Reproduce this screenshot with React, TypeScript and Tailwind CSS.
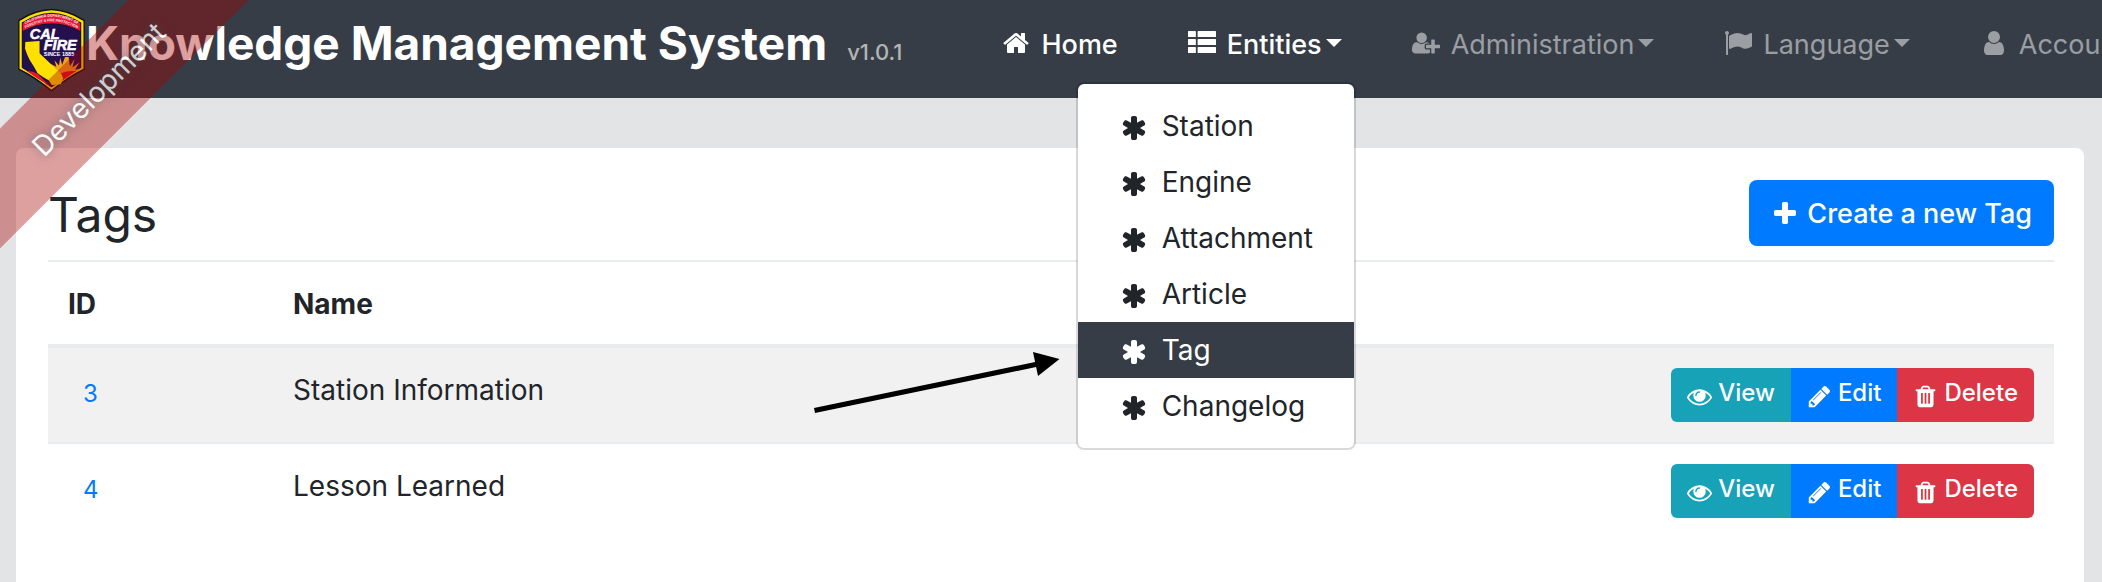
import type { ReactNode } from "react";

const GLYPHS = {
  home: "M1472 992v480q0 26-19 45t-45 19h-384v-384h-256v384h-384q-26 0-45-19t-19-45v-480q0-1 .5-3t.5-3l575-474 575 474q1 2 1 6zm223-69l-62 74q-8 9-21 11h-3q-13 0-21-7l-692-577-692 577q-12 8-24 7-13-2-21-11l-62-74q-8-10-7-23.5t11-21.5l719-599q32-26 76-26t76 26l244 204v-195q0-14 9-23t23-9h192q14 0 23 9t9 23v408l219 182q10 8 11 21.5t-7 23.5z",
  list: "M40 128h424q40 0 40 40v304q0 40-40 40h-424q-40 0-40-40v-304q0-40 40-40zm616 0h1096q40 0 40 40v304q0 40-40 40h-1096q-40 0-40-40v-304q0-40 40-40zm-616 512h424q40 0 40 40v304q0 40-40 40h-424q-40 0-40-40v-304q0-40 40-40zm616 0h1096q40 0 40 40v304q0 40-40 40h-1096q-40 0-40-40v-304q0-40 40-40zm-616 512h424q40 0 40 40v304q0 40-40 40h-424q-40 0-40-40v-304q0-40 40-40zm616 0h1096q40 0 40 40v304q0 40-40 40h-1096q-40 0-40-40v-304q0-40 40-40z",
  userPlus:
    "M704 896q-159 0-271.5-112.5t-112.5-271.5 112.5-271.5 271.5-112.5 271.5 112.5 112.5 271.5-112.5 271.5-271.5 112.5zm960 128h352q13 0 22.5 9.5t9.5 22.5v192q0 13-9.5 22.5t-22.5 9.5h-352v352q0 13-9.5 22.5t-22.5 9.5h-192q-13 0-22.5-9.5t-9.5-22.5v-352h-352q-13 0-22.5-9.5t-9.5-22.5v-192q0-13 9.5-22.5t22.5-9.5h352v-352q0-13 9.5-22.5t22.5-9.5h192q13 0 22.5 9.5t9.5 22.5v352zm-736 224q0 52 38 90t90 38h256v238q-68 50-171 50h-874q-121 0-194-69t-73-190q0-53 3.5-103.5t14-109 26.5-108.5 43-97.5 62-81 85.5-53.5 111.5-20q19 0 39 17 79 61 154.5 91.5t164.5 30.5 164.5-30.5 154.5-91.5q20-17 39-17 132 0 217 96h-223q-52 0-90 38t-38 90v192z",
  flag: "M320 256q0 72-64 110v1266q0 13-9.5 22.5t-22.5 9.5h-64q-13 0-22.5-9.5t-9.5-22.5v-1266q-64-38-64-110 0-53 37.5-90.5t90.5-37.5 90.5 37.5 37.5 90.5zm1472 64v763q0 25-12.5 38.5t-39.5 27.5q-215 116-369 116-61 0-123.5-22t-108.5-48-115.5-48-142.5-22q-192 0-464 146-17 9-33 9-26 0-45-19t-19-45v-742q0-32 31-55 21-14 79-43 236-120 421-120 107 0 200 29t219 88q38 19 88 19 54 0 117.5-21t110-47 88-47 54.5-21q26 0 45 19t19 45z",
  user: "M1536 1399q0 109-62.5 187t-150.5 78h-854q-88 0-150.5-78t-62.5-187q0-85 8.5-160.5t31.5-152 58.5-131 94-89 134.5-34.5q131 128 313 128t313-128q76 0 134.5 34.5t94 89 58.5 131 31.5 152 8.5 160.5zm-256-887q0 159-112.5 271.5t-271.5 112.5-271.5-112.5-112.5-271.5 112.5-271.5 271.5-112.5 271.5 112.5 112.5 271.5z",
  asterisk:
    "M1546 1050q46 26 59.5 77.5t-12.5 97.5l-64 110q-26 46-77.5 59.5t-97.5-12.5l-266-153v307q0 52-38 90t-90 38h-128q-52 0-90-38t-38-90v-307l-266 153q-46 26-97.5 12.5t-77.5-59.5l-64-110q-26-46-12.5-97.5t59.5-77.5l266-154-266-154q-46-26-59.5-77.5t12.5-97.5l64-110q26-46 77.5-59.5t97.5 12.5l266 153v-307q0-52 38-90t90-38h128q52 0 90 38t38 90v307l266-153q46-26 97.5-12.5t77.5 59.5l64 110q26 46 12.5 97.5t-59.5 77.5l-266 154z",
  plus: "M1600 736v192q0 40-28 68t-68 28h-416v416q0 40-28 68t-68 28h-192q-40 0-68-28t-28-68v-416h-416q-40 0-68-28t-28-68v-192q0-40 28-68t68-28h416v-416q0-40 28-68t68-28h192q40 0 68 28t28 68v416h416q40 0 68 28t28 68z",
  eye: "M1664 960q-152-236-381-353 61 104 61 225 0 185-131.5 316.5t-316.5 131.5-316.5-131.5-131.5-316.5q0-121 61-225-229 117-381 353 133 205 333.5 326.5t434.5 121.5 434.5-121.5 333.5-326.5zm-720-384q0-20-14-34t-34-14q-125 0-214.5 89.5t-89.5 214.5q0 20 14 34t34 14 34-14 14-34q0-86 61-147t147-61q20 0 34-14t14-34zm848 384q0 34-20 69-140 230-376.5 368.5t-499.5 138.5-499.5-139-376.5-368q-20-35-20-69t20-69q140-229 376.5-368t499.5-139 499.5 139 376.5 368q20 35 20 69z",
  pencil:
    "M491 1536l91-91-235-235-91 91v107h128v128h107zm523-928q0-22-22-22-10 0-17 7l-542 542q-7 7-7 17 0 22 22 22 10 0 17-7l542-542q7-7 7-17zm-54-192l416 416-832 832h-416v-416zm683 96q0 53-37 90l-166 166-416-416 166-165q36-38 90-38 53 0 91 38l235 234q37 39 37 91z",
  trash:
    "M704 1376v-704q0-14-9-23t-23-9h-64q-14 0-23 9t-9 23v704q0 14 9 23t23 9h64q14 0 23-9t9-23zm256 0v-704q0-14-9-23t-23-9h-64q-14 0-23 9t-9 23v704q0 14 9 23t23 9h64q14 0 23-9t9-23zm256 0v-704q0-14-9-23t-23-9h-64q-14 0-23 9t-9 23v704q0 14 9 23t23 9h64q14 0 23-9t9-23zm-544-992h448l-48-117q-7-9-17-11h-317q-10 2-17 11zm928 32v64q0 14-9 23t-23 9h-96v948q0 83-47 143.5t-113 60.5h-832q-66 0-113-58.5t-47-141.5v-952h-96q-14 0-23-9t-9-23v-64q0-14 9-23t23-9h309l70-167q15-37 54-63t79-26h320q40 0 79 26t54 63l70 167h309q14 0 23 9t9 23z",
};

type GlyphName = keyof typeof GLYPHS;

function Glyph({ name, className = "size-7" }: { name: GlyphName; className?: string }) {
  const width = name === "userPlus" ? 2048 : 1792;
  return (
    <svg viewBox={`0 0 ${width} 1792`} fill="currentColor" aria-hidden="true" className={`shrink-0 ${className}`}>
      <path d={GLYPHS[name]} />
    </svg>
  );
}

function Caret() {
  return (
    <svg viewBox="0 0 16 8" fill="currentColor" aria-hidden="true" className="mb-1 ml-1 h-2 w-4 shrink-0">
      <path d="M0 0h16l-8 8z" />
    </svg>
  );
}

function Logo() {
  return (
    <svg viewBox="12 10 210 260" role="img" aria-label="Cal Fire" className="mt-0.5 h-[84px] w-[69px] shrink-0">
      <defs>
        <clipPath id="field">
          <path d="M27 74Q70 54 117 53Q164 54 207 74V196Q164 226 117 255Q70 226 27 196Z" />
        </clipPath>
        <path id="arc-top" d="M33 62Q76 37 117 37Q158 37 201 62" />
        <path id="arc-low" d="M32 76Q76 51 117 51Q158 51 202 76" />
      </defs>
      <path d="M14 47Q64 14 117 12Q170 14 220 47V201Q172 224 117 269Q62 224 14 201Z" fill="#14121c" />
      <path d="M18 50Q66 19 117 17Q168 19 216 50V198Q170 220 117 263Q64 220 18 198Z" fill="#ffe100" />
      <path d="M25 55Q70 27 117 25Q164 27 209 55V195Q166 216 117 255Q68 216 25 195Z" fill="#14121c" />
      <path d="M28 57Q72 30 117 28Q162 30 206 57V81Q164 58 117 57Q70 58 28 81Z" fill="#ee1438" />
      <g clipPath="url(#field)">
        <path d="M27 82Q70 61 117 60Q164 61 207 82V260H27Z" fill="#24104f" />
        <path
          d="M170 162l4 28 14-22-6 26 22-16-14 22 24-4-22 12v14h-64l-4-14-18-8 20-2-14-16 20 10-6-20 14 16 4-24 6 22 9-24z"
          fill="#f5a21d"
        />
        <circle cx="166" cy="210" r="22" fill="#f5a21d" />
        <path d="M27 207Q52 200 75 214L120 260H27Z" fill="#e8132f" />
        <path d="M138 216Q170 200 207 208V260H118Z" fill="#e8132f" />
      </g>
      <path
        d="M36 115L80 112V150L148 215L153 228L146 246L118 248L108 234L92 224L74 212L62 190L50 172L42 155L35 135Z"
        fill="#ffe100"
      />
      <g fill="#ffe3e3" fontFamily="Inter, sans-serif" fontWeight="700">
        <text fontSize="11.5" textAnchor="middle">
          <textPath href="#arc-top" startOffset="50%">CALIFORNIA DEPARTMENT OF</textPath>
        </text>
        <text fontSize="11" textAnchor="middle">
          <textPath href="#arc-low" startOffset="50%">FORESTRY &amp; FIRE PROTECTION</textPath>
        </text>
      </g>
      <g fill="#fff" fontFamily="'Liberation Sans', Arial, sans-serif" fontWeight="700">
        <text x="50" y="107" fontSize="45" fontStyle="italic" stroke="#fff" strokeWidth="1.5">CAL</text>
        <text x="93" y="141" fontSize="45" fontStyle="italic" stroke="#fff" strokeWidth="1.5">FIRE</text>
        <text x="93" y="160" fontSize="17">SINCE 1885</text>
      </g>
    </svg>
  );
}

function NavItem({
  icon,
  label,
  caret = false,
  active = false,
  children,
}: {
  icon: GlyphName;
  label: string;
  caret?: boolean;
  active?: boolean;
  children?: ReactNode;
}) {
  const body = (
    <>
      <span className="mb-1 mr-[7px] flex w-9 justify-center">
        <Glyph name={icon} />
      </span>
      {label}
      {caret && <Caret />}
    </>
  );
  const look = `flex items-center whitespace-nowrap text-[27px] leading-10 ${
    active ? "font-medium text-white" : "text-white/50"
  }`;
  return (
    <li className="relative shrink-0">
      {caret ? (
        <button type="button" className={look} aria-haspopup="menu">
          {body}
        </button>
      ) : (
        <a href="#" className={look}>
          {body}
        </a>
      )}
      {children}
    </li>
  );
}

const ENTITIES = ["Station", "Engine", "Attachment", "Article", "Tag", "Changelog"];

function EntityMenu({ current }: { current: string }) {
  return (
    <ul className="absolute -right-3.5 top-full z-20 mt-[17px] w-[280px] rounded-lg border-2 border-black/15 bg-white bg-clip-padding py-3.5">
      {ENTITIES.map((name) => (
        <li key={name}>
          <a
            href="#"
            className={`flex items-center pl-[38px] text-[28px] leading-[56px] ${
              name === current ? "bg-[#363d47] text-white" : "text-[#212529]"
            }`}
          >
            <span className="mr-2.5 mt-1 flex w-9 justify-center">
              <Glyph name="asterisk" />
            </span>
            {name}
          </a>
        </li>
      ))}
    </ul>
  );
}

function RowButton({ icon, label, className }: { icon: GlyphName; label: string; className: string }) {
  return (
    <button
      type="button"
      className={`flex items-center gap-1.5 px-4 pb-3 pt-2 text-2xl font-medium leading-[34px] text-white ${className}`}
    >
      <Glyph name={icon} className="mt-1.5 size-[25px]" />
      {label}
    </button>
  );
}

const TAGS = [
  { id: 3, name: "Station Information" },
  { id: 4, name: "Lesson Learned" },
];

export default function App() {
  return (
    <div className="relative flex min-h-screen flex-col overflow-hidden bg-[#e3e4e6] font-['Inter',sans-serif] text-[#212529]">
      <nav className="relative z-10 flex items-center bg-[#363d47] py-1.5 pl-[17px]">
        <a href="#" className="mr-24 flex shrink-0 items-center">
          <Logo />
          <span className="mb-3 flex items-baseline whitespace-nowrap">
            <span className="text-[46px] font-bold leading-[60px] text-white">Knowledge Management System</span>
            <span className="ml-5 text-[22px] font-medium text-[#b4b4b4]">v1.0.1</span>
          </span>
        </a>
        <ul className="flex gap-[66px] pb-2">
          <NavItem icon="home" label="Home" active />
          <NavItem icon="list" label="Entities" caret active>
            <EntityMenu current="Tag" />
          </NavItem>
          <NavItem icon="userPlus" label="Administration" caret />
          <NavItem icon="flag" label="Language" caret />
          <NavItem icon="user" label="Account" caret />
        </ul>
      </nav>

      <main className="ml-4 mr-[18px] mt-[50px] flex-1 rounded-t-lg bg-white pl-8 pr-[30px] pt-8">
        <header className="mb-3.5 flex items-start justify-between">
          <h1 className="pt-1 text-5xl leading-[62px]">Tags</h1>
          <button
            type="button"
            className="flex items-center gap-2 rounded-lg bg-[#007bff] px-[22px] pt-px text-[27px] font-medium leading-[65px] text-white"
          >
            <Glyph name="plus" />
            Create a new Tag
          </button>
        </header>

        <table className="w-full border-separate border-spacing-0 text-left text-[28px] leading-[42px]">
          <thead>
            <tr>
              <th scope="col" className="w-[225px] border-b-4 border-t-2 border-[#e9ecef] px-5 pb-[19px] pt-[21px] font-bold">
                ID
              </th>
              <th scope="col" className="border-b-4 border-t-2 border-[#e9ecef] px-5 pb-[19px] pt-[21px] font-bold">
                Name
              </th>
              <td className="border-b-4 border-t-2 border-[#e9ecef]" />
            </tr>
          </thead>
          <tbody>
            {TAGS.map((tag, i) => {
              const cell = `px-5 pb-[19px] pt-[21px] align-top ${i > 0 ? "border-t-2 border-[#e9ecef]" : ""}`;
              const actionCell = `px-5 py-5 align-top ${i > 0 ? "border-t-2 border-[#e9ecef]" : ""}`;
              return (
                <tr key={tag.id} className={i % 2 === 0 ? "bg-[#f1f1f1]" : ""}>
                  <td className={cell}>
                    <a href="#" className="block px-[15px] pb-3 pt-2 text-2xl leading-[34px] text-[#007bff]">
                      {tag.id}
                    </a>
                  </td>
                  <td className={cell}>{tag.name}</td>
                  <td className={actionCell}>
                    <div className="flex justify-end">
                      <RowButton icon="eye" label="View" className="rounded-l-md bg-[#17a2b8]" />
                      <RowButton icon="pencil" label="Edit" className="bg-[#007bff]" />
                      <RowButton icon="trash" label="Delete" className="rounded-r-md bg-[#dc3545]" />
                    </div>
                  </td>
                </tr>
              );
            })}
          </tbody>
        </table>
      </main>

      <div className="pointer-events-none absolute -left-[111px] top-[47px] z-30 w-[420px] -rotate-45 bg-[rgba(170,0,0,0.5)] text-center text-[28px] leading-[85px] text-white opacity-75 [text-shadow:0_0_10px_#444]">
        Development
      </div>

      <svg viewBox="0 0 260 80" aria-hidden="true" className="pointer-events-none absolute left-[810px] top-[340px] z-20 h-20 w-[260px]">
        <path d="M4.5 70.5L228 24" stroke="#000" strokeWidth="5" />
        <path d="M223 12L249.500 19L228 36Z" fill="#000" />
      </svg>
    </div>
  );
}
